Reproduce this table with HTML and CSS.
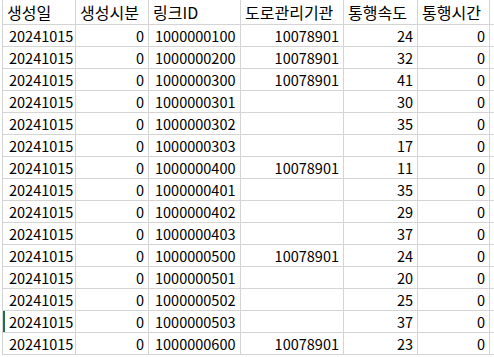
FILE: index.html
```html
<!DOCTYPE html>
<html lang="ko">
<head>
<meta charset="utf-8">
<link rel="stylesheet" href="styles.css">
</head>
<body>
<table class="sheet">
  <colgroup>
    <col class="c1"><col class="c2"><col class="c3"><col class="c4"><col class="c5"><col class="c6"><col class="c7">
  </colgroup>
  <thead>
    <tr>
      <th>생성일</th><th>생성시분</th><th>링크ID</th><th>도로관리기관</th><th>통행속도</th><th>통행시간</th><th></th>
    </tr>
  </thead>
  <tbody>
    <tr><td class="t">20241015</td><td>0</td><td class="t">1000000100</td><td>10078901</td><td>24</td><td>0</td><td></td></tr>
    <tr><td class="t">20241015</td><td>0</td><td class="t">1000000200</td><td>10078901</td><td>32</td><td>0</td><td></td></tr>
    <tr><td class="t">20241015</td><td>0</td><td class="t">1000000300</td><td>10078901</td><td>41</td><td>0</td><td></td></tr>
    <tr><td class="t">20241015</td><td>0</td><td class="t">1000000301</td><td></td><td>30</td><td>0</td><td></td></tr>
    <tr><td class="t">20241015</td><td>0</td><td class="t">1000000302</td><td></td><td>35</td><td>0</td><td></td></tr>
    <tr><td class="t">20241015</td><td>0</td><td class="t">1000000303</td><td></td><td>17</td><td>0</td><td></td></tr>
    <tr><td class="t">20241015</td><td>0</td><td class="t">1000000400</td><td>10078901</td><td>11</td><td>0</td><td></td></tr>
    <tr><td class="t">20241015</td><td>0</td><td class="t">1000000401</td><td></td><td>35</td><td>0</td><td></td></tr>
    <tr><td class="t">20241015</td><td>0</td><td class="t">1000000402</td><td></td><td>29</td><td>0</td><td></td></tr>
    <tr><td class="t">20241015</td><td>0</td><td class="t">1000000403</td><td></td><td>37</td><td>0</td><td></td></tr>
    <tr><td class="t">20241015</td><td>0</td><td class="t">1000000500</td><td>10078901</td><td>24</td><td>0</td><td></td></tr>
    <tr><td class="t">20241015</td><td>0</td><td class="t">1000000501</td><td></td><td>20</td><td>0</td><td></td></tr>
    <tr><td class="t">20241015</td><td>0</td><td class="t">1000000502</td><td></td><td>25</td><td>0</td><td></td></tr>
    <tr><td class="t sel">20241015</td><td>0</td><td class="t">1000000503</td><td></td><td>37</td><td>0</td><td></td></tr>
    <tr><td class="t">20241015</td><td>0</td><td class="t">1000000600</td><td>10078901</td><td>23</td><td>0</td><td></td></tr>
  </tbody>
</table>
</body>
</html>
```
FILE: styles.css
```css
html, body {
  margin: 0;
  padding: 0;
  background: #ffffff;
  overflow: hidden;
}
body {
  width: 494px;
  height: 357px;
  font-family: "Noto Sans CJK KR", "Noto Sans", sans-serif;
  font-size: 14.5px;
  color: #000000;
}
.sheet {
  border-collapse: collapse;
  table-layout: fixed;
  width: 492px;
  margin-left: 2px;
}
.c1 { width: 73px; }
.c2 { width: 73px; }
.c3 { width: 92px; }
.c4 { width: 103px; }
.c5 { width: 74px; }
.c6 { width: 72px; }
.c7 { width: 5px; }
.sheet th, .sheet td {
  border: 1px solid #d4d4d4;
  padding: 0 4px 0 5px;
  white-space: nowrap;
  overflow: hidden;
  line-height: 21px;
  height: 21px;
}
.sheet th {
  border-top: none;
  font-weight: normal;
  text-align: left;
  font-size: 16px;
  height: 24px;
  line-height: 24px;
  padding: 0 0 0 4px;
}
.sheet th:last-child, .sheet td:last-child { padding: 0; }
.sheet td { text-align: right; }
.sheet td.t { text-align: left; padding-left: 6px; }
.sheet td.sel { box-shadow: inset 2px 0 0 #217346; }
```
